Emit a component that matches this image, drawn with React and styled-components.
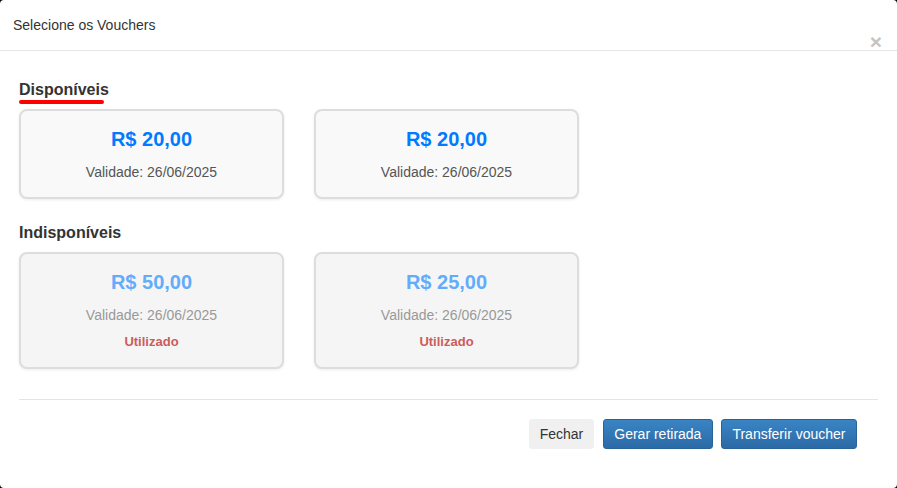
import React from 'react';
import styled, { createGlobalStyle } from 'styled-components';

const GlobalStyle = createGlobalStyle`
  html, body {
    margin: 0;
    padding: 0;
    background: #000;
  }
  body {
    font-family: "Liberation Sans", Arial, sans-serif;
    font-size: 14px;
    color: #333;
  }
`;

const Modal = styled.div`
  width: 897px;
  height: 488px;
  background: #fff;
  border-radius: 4px;
  box-sizing: border-box;
  overflow: hidden;
`;

const Header = styled.div`
  position: relative;
  height: 51px;
  box-sizing: border-box;
  padding: 16px 13px 0;
  border-bottom: 1px solid #e5e5e5;
`;

const Title = styled.h4`
  margin: 0;
  font-size: 14px;
  font-weight: normal;
  line-height: 18px;
  color: #333;
`;

const Close = styled.button`
  position: absolute;
  right: 15px;
  top: 31px;
  padding: 0;
  border: 0;
  background: transparent;
  font-family: "Liberation Sans", Arial, sans-serif;
  font-size: 21px;
  font-weight: bold;
  line-height: 21px;
  color: #c4c4c4;
  cursor: pointer;
`;

const Body = styled.div`
  padding: 29px 19px 0;
`;

const SectionTitle = styled.h3`
  margin: 0;
  display: inline-block;
  vertical-align: top;
  font-size: 16px;
  font-weight: bold;
  line-height: 20px;
  color: #333;
  position: relative;
  ${(p) =>
    p.underline &&
    `
    &::after {
      content: '';
      position: absolute;
      left: 0;
      right: 5px;
      bottom: -4px;
      height: 4px;
      border-radius: 2px;
      background: #f00;
    }
  `}
`;

const CardRow = styled.div`
  display: flex;
  gap: 30px;
  margin-top: ${(p) => p.top}px;
  margin-bottom: ${(p) => p.bottom}px;
`;

const Card = styled.div`
  width: 265px;
  box-sizing: border-box;
  border: 2px solid #ddd;
  border-radius: 8px;
  background: ${(p) => (p.disabled ? '#f5f5f5' : '#f9f9f9')};
  box-shadow: 0 1px 3px rgba(0, 0, 0, 0.08);
  display: flex;
  flex-direction: column;
  align-items: center;
  padding: ${(p) => (p.disabled ? '15px 0 17px' : '15px 0 16px')};
  cursor: ${(p) => (p.disabled ? 'not-allowed' : 'pointer')};
`;

const Amount = styled.div`
  font-size: 20px;
  font-weight: bold;
  line-height: 26px;
  color: ${(p) => (p.disabled ? '#62acfb' : '#007bff')};
`;

const Validity = styled.div`
  margin-top: 11px;
  font-size: 14px;
  line-height: 18px;
  color: ${(p) => (p.disabled ? '#999' : '#555')};
`;

const Status = styled.div`
  margin-top: 10px;
  font-size: 13px;
  font-weight: bold;
  line-height: 16px;
  color: #cc5c5a;
`;

const Divider = styled.hr`
  margin: 0 19px;
  border: 0;
  border-top: 1px solid #e5e5e5;
`;

const Footer = styled.div`
  display: flex;
  justify-content: flex-end;
  gap: 8px;
  padding: 19px 40px 0 0;
`;

const Button = styled.button`
  height: 30px;
  padding: 0 ${(p) => (p.primary ? 10.5 : 9.5)}px;
  margin-right: ${(p) => (p.primary ? 0 : 1)}px;
  border-radius: 3px;
  font-family: "Liberation Sans", Arial, sans-serif;
  font-size: 14px;
  line-height: 20px;
  cursor: pointer;
  border: 1px solid ${(p) => (p.primary ? '#2a6496' : '#f0f0f0')};
  color: ${(p) => (p.primary ? '#fff' : '#333')};
  background: ${(p) =>
    p.primary ? 'linear-gradient(to bottom, #3a84c4 0%, #2b6aa6 100%)' : '#f0f0f0'};
`;

const vouchers = [
  { value: 'R$ 20,00', date: '26/06/2025' },
  { value: 'R$ 20,00', date: '26/06/2025' },
];

const used = [
  { value: 'R$ 50,00', date: '26/06/2025' },
  { value: 'R$ 25,00', date: '26/06/2025' },
];

export default function App() {
  return (
    <>
      <GlobalStyle />
      <Modal>
        <Header>
          <Title>Selecione os Vouchers</Title>
          <Close aria-label="Fechar">×</Close>
        </Header>
        <Body>
          <SectionTitle underline>Disponíveis</SectionTitle>
          <CardRow top={9} bottom={24}>
            {vouchers.map((v, i) => (
              <Card key={i}>
                <Amount>{v.value}</Amount>
                <Validity>Validade: {v.date}</Validity>
              </Card>
            ))}
          </CardRow>
          <SectionTitle>Indisponíveis</SectionTitle>
          <CardRow top={9} bottom={30}>
            {used.map((v, i) => (
              <Card key={i} disabled>
                <Amount disabled>{v.value}</Amount>
                <Validity disabled>Validade: {v.date}</Validity>
                <Status>Utilizado</Status>
              </Card>
            ))}
          </CardRow>
        </Body>
        <Divider />
        <Footer>
          <Button>Fechar</Button>
          <Button primary>Gerar retirada</Button>
          <Button primary>Transferir voucher</Button>
        </Footer>
      </Modal>
    </>
  );
}
